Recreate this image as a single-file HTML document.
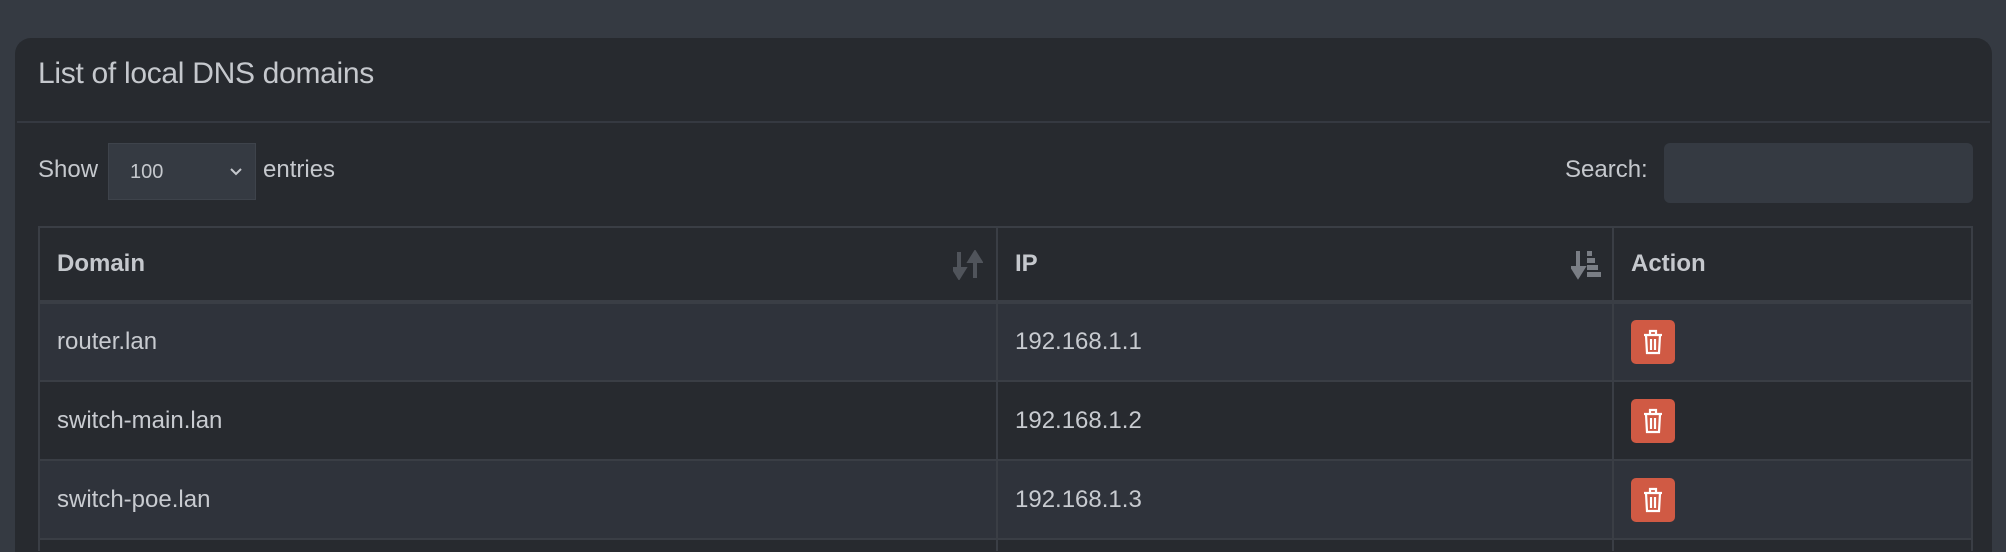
<!DOCTYPE html>
<html><head><meta charset="utf-8"><style>
html,body{margin:0;padding:0;width:2006px;height:552px;overflow:hidden;}
body{background:#353a42;font-family:"Liberation Sans",sans-serif;color:#c8cbd0;position:relative;}
.card{position:absolute;left:15px;top:38px;width:1977px;height:514px;background:#272a2f;border-radius:16px 16px 0 0;}
.title{position:absolute;left:38px;top:57px;font-size:30px;color:#c5c8cd;letter-spacing:-0.3px;}
.div{position:absolute;left:17px;top:121px;width:1973px;height:2px;background:#353941;}
.lbl{position:absolute;font-size:24px;color:#c5c8cd;}
.sel{position:absolute;left:108px;top:143px;width:148px;height:57px;background:#353a42;border:1px solid #3e434b;box-sizing:border-box;}
.sel span{position:absolute;left:21px;top:17px;font-size:20px;color:#c5c8cd;}
.search{position:absolute;left:1664px;top:143px;width:309px;height:60px;background:#353a42;border-radius:6px;}
table{position:absolute;left:38px;top:226px;width:1935px;border-collapse:collapse;border:2px solid #3a3e45;border-bottom:none;}
td,th{border:2px solid #3a3e45;text-align:left;padding:0 0 0 17px;font-size:24px;box-sizing:border-box;}
th{height:75px;font-weight:bold;color:#c5c8cd;background:#272a2f;border-bottom:4px solid #3a3e45;position:relative;}
td{height:79px;color:#c8cbd0;}
tr.o td{background:#2f333b;}
tr.e td{background:#272a2f;}
tr.last td{height:12px;border-bottom:none;font-size:1px;}
.btn{display:inline-block;width:44px;height:44px;background:#d05a44;border-radius:5px;vertical-align:middle;position:relative;}
.btn svg{position:absolute;left:12px;top:9px;}
.si{position:absolute;top:22px;}
</style></head><body>
<div class="card"></div>
<div class="title">List of local DNS domains</div>
<div class="div"></div>
<div class="lbl" style="left:38px;top:156px;">Show</div>
<div class="sel"><span>100</span>
<svg style="position:absolute;left:120px;top:23px" width="14" height="10" viewBox="0 0 14 10"><path d="M2 2 L7 7 L12 2" stroke="#c5c8cd" stroke-width="2" fill="none"/></svg></div>
<div class="lbl" style="left:263px;top:156px;">entries</div>
<div class="lbl" style="left:1565px;top:156px;">Search:</div>
<div class="search"></div>
<table>
<tr><th style="width:958px">Domain<svg class="si" style="left:913px" width="30" height="30" viewBox="0 0 30 30"><path d="M6 2v20M1 19l5 8 5-8z" stroke="#50545b" stroke-width="4" fill="#50545b"/><path d="M22 28V8M17 11l5-8 5 8z" stroke="#50545b" stroke-width="4" fill="#50545b"/></svg></th>
<th style="width:616px">IP<svg class="si" style="left:573px" width="32" height="30" viewBox="0 0 32 30"><path d="M7 1v20M2 18l5 8 5-8z" stroke="#7a7e85" stroke-width="4" fill="#7a7e85"/><rect x="16" y="1" width="5" height="5" fill="#7a7e85"/><rect x="16" y="8" width="8" height="5" fill="#7a7e85"/><rect x="16" y="15" width="11" height="5" fill="#7a7e85"/><rect x="16" y="22" width="14" height="5" fill="#7a7e85"/></svg></th>
<th>Action</th></tr>
<tr class="o"><td>router.lan</td><td>192.168.1.1</td><td><span class="btn"><svg width="20" height="26" viewBox="0 0 20 26"><path d="M1 6h18M7 6V2h6v4M3 6l1 18h12l1-18M8 10v11M12 10v11" stroke="#fff" stroke-width="2.2" fill="none"/></svg></span></td></tr>
<tr class="e"><td>switch-main.lan</td><td>192.168.1.2</td><td><span class="btn"><svg width="20" height="26" viewBox="0 0 20 26"><path d="M1 6h18M7 6V2h6v4M3 6l1 18h12l1-18M8 10v11M12 10v11" stroke="#fff" stroke-width="2.2" fill="none"/></svg></span></td></tr>
<tr class="o"><td>switch-poe.lan</td><td>192.168.1.3</td><td><span class="btn"><svg width="20" height="26" viewBox="0 0 20 26"><path d="M1 6h18M7 6V2h6v4M3 6l1 18h12l1-18M8 10v11M12 10v11" stroke="#fff" stroke-width="2.2" fill="none"/></svg></span></td></tr>
<tr class="e last"><td></td><td></td><td></td></tr>
</table>
</body></html>
